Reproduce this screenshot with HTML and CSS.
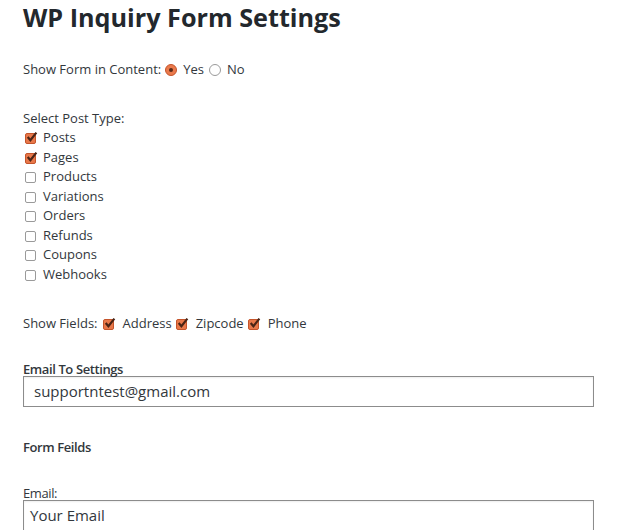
FILE: index.html
```html
<!DOCTYPE html>
<html>
<head>
<meta charset="utf-8">
<link rel="stylesheet" href="styles.css">
</head>
<body>
<div class="wrap">
  <h1 class="title">WP Inquiry Form Settings</h1>

  <div class="row show-form">
    <span class="lbl">Show Form in Content:</span>
    <span class="radio on"></span><span class="opt">Yes</span>
    <span class="radio"></span><span class="opt">No</span>
  </div>

  <div class="post-types">
    <div class="lbl">Select Post Type:</div>
    <ul class="checklist">
      <li><span class="cb on"><svg viewBox="0 0 12 12"><path d="M2.5 5.5 L5 8.5 L10.5 1.5"/></svg></span>Posts</li>
      <li><span class="cb on"><svg viewBox="0 0 12 12"><path d="M2.5 5.5 L5 8.5 L10.5 1.5"/></svg></span>Pages</li>
      <li><span class="cb"></span>Products</li>
      <li><span class="cb"></span>Variations</li>
      <li><span class="cb"></span>Orders</li>
      <li><span class="cb"></span>Refunds</li>
      <li><span class="cb"></span>Coupons</li>
      <li><span class="cb"></span>Webhooks</li>
    </ul>
  </div>

  <div class="row fields">
    <span class="lbl">Show Fields:</span>
    <span class="cb on"><svg viewBox="0 0 12 12"><path d="M2.5 5.5 L5 8.5 L10.5 1.5"/></svg></span><span class="fopt">Address</span>
    <span class="cb on"><svg viewBox="0 0 12 12"><path d="M2.5 5.5 L5 8.5 L10.5 1.5"/></svg></span><span class="fopt">Zipcode</span>
    <span class="cb on"><svg viewBox="0 0 12 12"><path d="M2.5 5.5 L5 8.5 L10.5 1.5"/></svg></span><span class="fopt">Phone</span>
  </div>

  <div class="section">
    <div class="strong tight">Email To Settings</div>
    <div class="input big">supportntest@gmail.com</div>
  </div>

  <div class="strong feilds">Form Feilds</div>

  <div class="section email">
    <div class="lbl small">Email:</div>
    <div class="input">Your Email</div>
  </div>
</div>
</body>
</html>
```

FILE: styles.css
```css
html, body {
  margin: 0;
  padding: 0;
  background: #fff;
}
body {
  font-family: "Open Sans", "DejaVu Sans", sans-serif;
  color: #32373c;
  font-size: 13px;
  overflow: hidden;
}
.wrap {
  padding: 0 24px 0 23px;
}
.title {
  margin: 0;
  padding-top: 1px;
  font-size: 25.2px;
  font-weight: 700;
  line-height: 32px;
  color: #23282d;
}
.row {
  display: flex;
  align-items: center;
  line-height: 20px;
}
.show-form {
  margin-top: 26px;
}
.show-form .lbl {
  margin-right: 4px;
}
.radio {
  width: 12px;
  height: 12px;
  box-sizing: border-box;
  border-radius: 50%;
  border: 1px solid #9a9a9a;
  background: #fff;
  position: relative;
  margin-top: 2px;
}
.radio.on {
  border-color: #c4542b;
  background: #ea7a4c;
}
.radio.on::after {
  content: "";
  position: absolute;
  left: 3px;
  top: 3px;
  width: 4px;
  height: 4px;
  border-radius: 50%;
  background: #5a2a18;
}
.opt {
  margin-left: 6px;
  margin-right: 5px;
}
.post-types {
  margin-top: 29px;
}
.post-types .lbl {
  line-height: 20px;
}
.checklist {
  list-style: none;
  margin: 0;
  padding: 0;
}
.checklist li {
  display: flex;
  align-items: center;
  height: 19.5px;
  line-height: 19.5px;
}
.checklist .cb {
  margin: 2px 7px 0 2px;
}
.cb {
  width: 11px;
  height: 11px;
  box-sizing: border-box;
  border: 1px solid #9a9a9a;
  border-radius: 2px;
  background: #fff;
  display: inline-flex;
  flex: none;
  position: relative;
}
.cb.on {
  background: #e8784a;
  border-color: #c4542b;
}
.cb svg {
  position: absolute;
  left: -1px;
  top: -3px;
  width: 13px;
  height: 13px;
  overflow: visible;
}
.cb svg path {
  fill: none;
  stroke: #4a2415;
  stroke-width: 2;
}
.fields {
  margin-top: 29px;
}
.fields .lbl {
  margin-right: 5px;
}
.fields .cb {
  margin-top: 3px;
}
.fopt {
  margin-left: 9px;
  margin-right: 4px;
}
.section {
  margin-top: 29px;
}
.strong {
  font-weight: 600;
  line-height: 18px;
  letter-spacing: -0.4px;
}
.strong.tight {
  line-height: 14px;
}
.input {
  box-sizing: border-box;
  width: 571px;
  border: 1px solid #8c8c8c;
  box-shadow: inset 0 1px 2px rgba(0,0,0,0.07);
  font-size: 15px;
  color: #32373c;
  height: 31px;
  line-height: 29px;
  padding: 0 6px;
}
.input.big {
  padding-left: 10px;
}
.feilds {
  margin-top: 31px;
}
.section.email {
  margin-top: 30px;
}
.small {
  letter-spacing: -0.4px;
  line-height: 14px;
}
```
